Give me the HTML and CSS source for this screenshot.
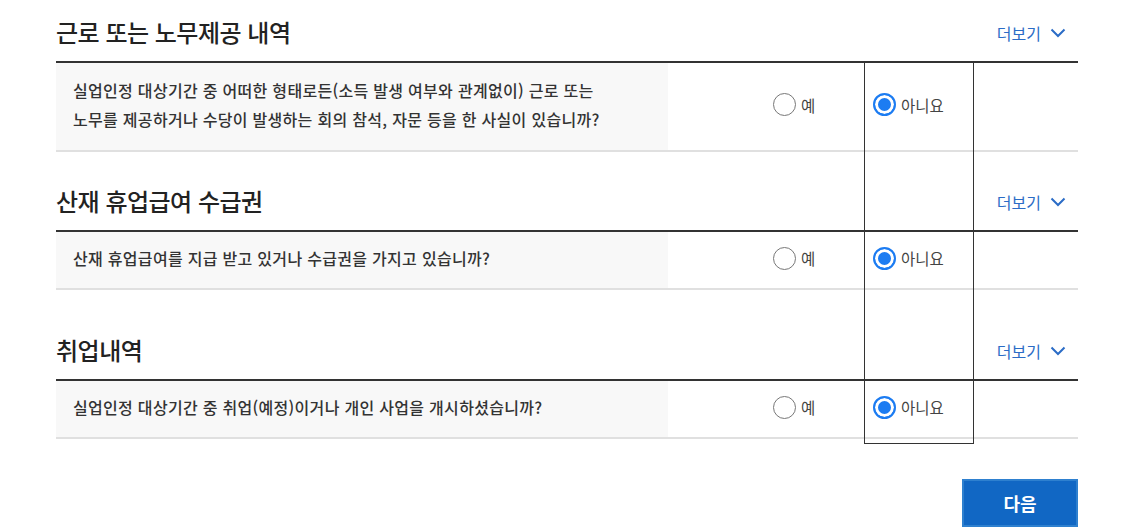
FILE: index.html
```html
<!DOCTYPE html>
<html lang="ko">
<head>
    <meta charset="UTF-8">
    <meta name="viewport" content="width=device-width, initial-scale=1.0">
    <title>실업인정 신청</title>
    <link rel="stylesheet" href="styles.css">
</head>
<body>
    <div class="wrap">
        <!-- 근로 또는 노무제공 -->
        <div class="section">
            <div class="section-head">
                <h2>근로 또는 노무제공 내역</h2>
                <a href="#" class="more">더보기
                    <svg width="16" height="10" viewBox="0 0 16 10"><polyline points="1.5,1.5 8,8 14.5,1.5" fill="none" stroke="#2b6cc6" stroke-width="2"/></svg>
                </a>
            </div>
            <div class="row row-tall">
                <div class="question">실업인정 대상기간 중 어떠한 형태로든(소득 발생 여부와 관계없이) 근로 또는<br>노무를 제공하거나 수당이 발생하는 회의 참석, 자문 등을 한 사실이 있습니까?</div>
                <label class="opt opt-yes"><span class="radio"></span>예</label>
                <label class="opt opt-no"><span class="radio on"></span>아니요</label>
            </div>
        </div>

        <!-- 산재 휴업급여 -->
        <div class="section section-2">
            <div class="section-head">
                <h2>산재 휴업급여 수급권</h2>
                <a href="#" class="more">더보기
                    <svg width="16" height="10" viewBox="0 0 16 10"><polyline points="1.5,1.5 8,8 14.5,1.5" fill="none" stroke="#2b6cc6" stroke-width="2"/></svg>
                </a>
            </div>
            <div class="row">
                <div class="question">산재 휴업급여를 지급 받고 있거나 수급권을 가지고 있습니까?</div>
                <label class="opt opt-yes"><span class="radio"></span>예</label>
                <label class="opt opt-no"><span class="radio on"></span>아니요</label>
            </div>
        </div>

        <!-- 취업내역 -->
        <div class="section section-3">
            <div class="section-head">
                <h2>취업내역</h2>
                <a href="#" class="more">더보기
                    <svg width="16" height="10" viewBox="0 0 16 10"><polyline points="1.5,1.5 8,8 14.5,1.5" fill="none" stroke="#2b6cc6" stroke-width="2"/></svg>
                </a>
            </div>
            <div class="row">
                <div class="question">실업인정 대상기간 중 취업(예정)이거나 개인 사업을 개시하셨습니까?</div>
                <label class="opt opt-yes"><span class="radio"></span>예</label>
                <label class="opt opt-no"><span class="radio on"></span>아니요</label>
            </div>
        </div>

        <div class="actions">
            <button class="btn-next">다음</button>
        </div>

        <!-- focus outline over the "no" column -->
        <div class="col-focus"></div>
    </div>
</body>
</html>
```

FILE: styles.css
```css
body {
    margin: 0;
    padding: 0;
    background-color: #fff;
    font-family: "Noto Sans CJK KR", "Noto Sans", sans-serif;
    color: #333;
}
.wrap {
    position: relative;
    width: 1022px;
    margin-left: 56px;
    padding-top: 5px;
}
.section-head {
    display: flex;
    justify-content: space-between;
    align-items: center;
    height: 56px;
    border-bottom: 2px solid #333;
}
.section-head h2 {
    margin: 0;
    margin-top: -4px;
    font-size: 24px;
    font-weight: 500;
    letter-spacing: -0.5px;
    color: #222;
}
.more {
    display: flex;
    align-items: center;
    gap: 9px;
    margin-right: 12px;
    font-size: 16px;
    color: #2b6cc6;
    text-decoration: none;
}
.section-2 {
    margin-top: 22px;
}
.section-3 {
    margin-top: 33px;
}
.row {
    display: grid;
    grid-template-columns: 612px 196px 109px 105px;
    height: 56px;
    border-bottom: 2px solid #e0e0e0;
}
.row-tall {
    height: 87px;
}
.question {
    display: flex;
    align-items: center;
    padding-left: 17px;
    padding-bottom: 4px;
    background-color: #f8f8f8;
    font-size: 16px;
    font-weight: 500;
    line-height: 29px;
    letter-spacing: 0.3px;
    color: #333;
}
.opt {
    display: flex;
    align-items: center;
    gap: 5px;
    padding-bottom: 4px;
    font-size: 15.5px;
    color: #444;
    cursor: pointer;
}
.opt-yes {
    padding-left: 105px;
}
.opt-no {
    padding-left: 9px;
}
.radio {
    width: 23px;
    height: 23px;
    border: 1px solid #777;
    border-radius: 50%;
    box-sizing: border-box;
}
.radio.on {
    border: 2px solid #1c7cf2;
    background-color: #1c7cf2;
    box-shadow: inset 0 0 0 3px #fff;
}
.actions {
    display: flex;
    justify-content: flex-end;
    margin-top: 40px;
}
.btn-next {
    width: 116px;
    height: 48px;
    background-color: #1167c4;
    border: 2px solid #2e80cf;
    color: #fff;
    font-family: inherit;
    font-size: 18px;
    font-weight: 700;
    cursor: pointer;
}
.col-focus {
    position: absolute;
    left: 808px;
    top: 62px;
    width: 110px;
    height: 382px;
    border: 1px solid #333;
    box-sizing: border-box;
    pointer-events: none;
}
```
